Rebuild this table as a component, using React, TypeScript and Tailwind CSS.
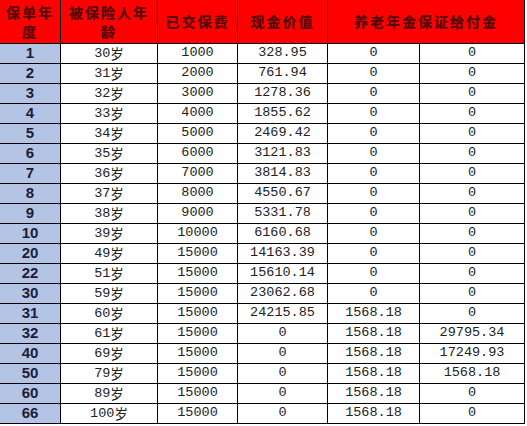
import React from "react";

const rows: string[][] = [
  ["1", "30", "1000", "328.95", "0", "0"],
  ["2", "31", "2000", "761.94", "0", "0"],
  ["3", "32", "3000", "1278.36", "0", "0"],
  ["4", "33", "4000", "1855.62", "0", "0"],
  ["5", "34", "5000", "2469.42", "0", "0"],
  ["6", "35", "6000", "3121.83", "0", "0"],
  ["7", "36", "7000", "3814.83", "0", "0"],
  ["8", "37", "8000", "4550.67", "0", "0"],
  ["9", "38", "9000", "5331.78", "0", "0"],
  ["10", "39", "10000", "6160.68", "0", "0"],
  ["20", "49", "15000", "14163.39", "0", "0"],
  ["22", "51", "15000", "15610.14", "0", "0"],
  ["30", "59", "15000", "23062.68", "0", "0"],
  ["31", "60", "15000", "24215.85", "1568.18", "0"],
  ["32", "61", "15000", "0", "1568.18", "29795.34"],
  ["40", "69", "15000", "0", "1568.18", "17249.93"],
  ["50", "79", "15000", "0", "1568.18", "1568.18"],
  ["60", "89", "15000", "0", "1568.18", "0"],
  ["66", "100", "15000", "0", "1568.18", "0"],
];

function Head({ children, span }: { children: React.ReactNode; span?: boolean }) {
  return (
    <div
      className={
        (span ? "col-span-2 " : "") +
        "bg-[#ff0000] flex items-center justify-center text-center"
      }
    >
      <span className="text-[14px] leading-[19px] font-semibold tracking-[2px] text-[#5a0606] [font-family:'Noto_Sans_CJK_SC',sans-serif] [text-shadow:0_0_0.4px_#5a0606]">
        {children}
      </span>
    </div>
  );
}

export default function App() {
  return (
    <div className="w-[527px] h-[426px] bg-white">
      <div className="w-[525px] bg-black pr-px pb-px grid grid-cols-[60px_96px_79px_89px_91px_104px] grid-rows-[43px_repeat(19,19px)] gap-px">
        <Head>
          保单年
          <br />度
        </Head>
        <Head>
          被保险人年
          <br />龄
        </Head>
        <Head>已交保费</Head>
        <Head>现金价值</Head>
        <Head span>养老年金保证给付金</Head>
        {rows.map((r, i) => (
          <React.Fragment key={i}>
            <div className="bg-[#b4c4e4] flex items-center justify-center text-[15px] font-bold text-[#1c1c3a] [font-family:'Liberation_Sans',Arial,sans-serif]">
              {r[0]}
            </div>
            {r.slice(1).map((c, j) => (
              <div
                key={j}
                className="bg-white flex items-center justify-center text-[13.5px] text-[#222] [font-family:'Liberation_Mono',monospace]"
              >
                <span>
                  {c}
                  {j === 0 && (
                    <span className="align-[-2px] text-[13.5px] [font-family:'Noto_Sans_CJK_SC',sans-serif]">
                      岁
                    </span>
                  )}
                </span>
              </div>
            ))}
          </React.Fragment>
        ))}
      </div>
    </div>
  );
}
